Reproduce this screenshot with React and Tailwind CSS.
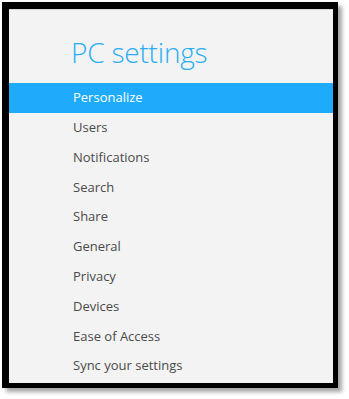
import React from 'react';

const items = [
  'Personalize',
  'Users',
  'Notifications',
  'Search',
  'Share',
  'General',
  'Privacy',
  'Devices',
  'Ease of Access',
  'Sync your settings',
];

export default function App() {
  return (
    <div className="w-[349px] h-[399px] bg-white pt-[2px] pl-[2px]" style={{ fontFamily: '"Open Sans", "Noto Sans", sans-serif' }}>
      <div className="w-[336px] h-[386px] border-[7px] border-black border-b-[5px] border-r-[5px] bg-[#f3f3f3] shadow-[4px_4px_4px_rgba(0,0,0,0.35)] overflow-hidden">
        <div className="h-px bg-[#d8d8d8]" />
        <h1 className="pl-[62px] pt-[23px] h-[73px] text-[28px] font-light text-[#2aaef3] leading-[38px] tracking-[-0.2px]">PC settings</h1>
        <ul className="flex flex-col">
          {items.map((label, i) => (
            <li
              key={label}
              className={`h-[29.8px] pl-[64px] flex items-center text-[13px] ${
                i === 0 ? 'bg-[#1eabfc] text-white' : 'text-[#4a4a4a]'
              }`}
            >
              {label}
            </li>
          ))}
        </ul>
      </div>
    </div>
  );
}
